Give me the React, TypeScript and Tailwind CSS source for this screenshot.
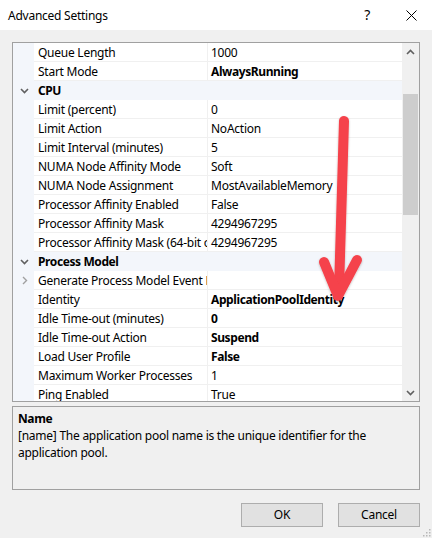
import React from "react";

type Row =
  | { kind: "cat"; name: string }
  | { kind: "prop"; name: string; value: string; bold?: boolean; expand?: boolean };

const rows: Row[] = [
  { kind: "prop", name: "Queue Length", value: "1000" },
  { kind: "prop", name: "Start Mode", value: "AlwaysRunning", bold: true },
  { kind: "cat", name: "CPU" },
  { kind: "prop", name: "Limit (percent)", value: "0" },
  { kind: "prop", name: "Limit Action", value: "NoAction" },
  { kind: "prop", name: "Limit Interval (minutes)", value: "5" },
  { kind: "prop", name: "NUMA Node Affinity Mode", value: "Soft" },
  { kind: "prop", name: "NUMA Node Assignment", value: "MostAvailableMemory" },
  { kind: "prop", name: "Processor Affinity Enabled", value: "False" },
  { kind: "prop", name: "Processor Affinity Mask", value: "4294967295" },
  { kind: "prop", name: "Processor Affinity Mask (64-bit option)", value: "4294967295" },
  { kind: "cat", name: "Process Model" },
  { kind: "prop", name: "Generate Process Model Event Log Entry", value: "", expand: true },
  { kind: "prop", name: "Identity", value: "ApplicationPoolIdentity", bold: true },
  { kind: "prop", name: "Idle Time-out (minutes)", value: "0", bold: true },
  { kind: "prop", name: "Idle Time-out Action", value: "Suspend", bold: true },
  { kind: "prop", name: "Load User Profile", value: "False", bold: true },
  { kind: "prop", name: "Maximum Worker Processes", value: "1" },
  { kind: "prop", name: "Ping Enabled", value: "True" },
];

function ChevronDown({ color = "#606060" }: { color?: string }) {
  return (
    <svg width="9" height="6" viewBox="0 0 9 6">
      <path d="M1 1 L4.5 4.5 L8 1" fill="none" stroke={color} strokeWidth="1.6" />
    </svg>
  );
}

function ChevronRight() {
  return (
    <svg width="6" height="9" viewBox="0 0 6 9">
      <path d="M1 1 L4.5 4.5 L1 8" fill="none" stroke="#a0a0a0" strokeWidth="1.4" />
    </svg>
  );
}

export default function App() {
  return (
    <div
      className="relative w-[432px] h-[538px] bg-[#f0f0f0] text-[12px] text-black overflow-hidden tracking-[-0.25px]"
      style={{ fontFamily: '"Noto Sans", "Open Sans", sans-serif' }}
    >
      {/* Title bar */}
      <div className="h-[30px] bg-white flex items-center justify-between pl-2 pr-[15px]">
        <span className="text-[12px] leading-none pt-[1px]">Advanced Settings</span>
        <div className="flex items-center gap-[36px]">
          <span className="text-[14px] leading-none">?</span>
          <svg width="11" height="11" viewBox="0 0 11 11">
            <path d="M0.5 0.5 L10.5 10.5 M10.5 0.5 L0.5 10.5" stroke="#000" strokeWidth="1" />
          </svg>
        </div>
      </div>

      <div className="px-3 pt-3">
        {/* Property grid */}
        <div className="h-[360px] border border-[#a0a0a0] bg-white flex">
          <div className="flex-1 overflow-hidden">
            {rows.map((r, i) =>
              r.kind === "cat" ? (
                <div key={i} className="h-[19px] flex bg-[#f3f6fb]">
                  <div className="w-[21px] flex items-center justify-center pl-[2px]">
                    <ChevronDown />
                  </div>
                  <div className="pl-[4px] font-bold leading-[20px] tracking-[-0.4px]">{r.name}</div>
                </div>
              ) : (
                <div key={i} className="h-[19px] flex">
                  <div className="w-[21px] bg-[#f3f6fb] flex items-center justify-center pl-[2px]">
                    {r.expand ? <ChevronRight /> : null}
                  </div>
                  <div className="w-[174px] shrink-0 border-b border-r border-[#f0f0f0] pl-[4px] overflow-hidden whitespace-nowrap leading-[19px]">
                    {r.name}
                  </div>
                  <div
                    className={
                      "flex-1 border-b border-[#f0f0f0] pl-[3px] whitespace-nowrap leading-[19px] overflow-hidden " +
                      (r.bold ? "font-bold tracking-[-0.4px]" : "")
                    }
                  >
                    {r.value}
                  </div>
                </div>
              )
            )}
          </div>
          {/* Scrollbar */}
          <div className="w-[17px] bg-[#f0f0f0] flex flex-col">
            <div className="h-[17px] flex items-center justify-center">
              <svg width="9" height="6" viewBox="0 0 9 6">
                <path d="M1 5 L4.5 1.5 L8 5" fill="none" stroke="#606060" strokeWidth="1.6" />
              </svg>
            </div>
            <div className="mt-[34px] h-[121px] mx-[1px] bg-[#cdcdcd]" />
            <div className="flex-1" />
            <div className="h-[17px] flex items-center justify-center">
              <ChevronDown />
            </div>
          </div>
        </div>

        {/* Description */}
        <div className="mt-1 h-[84px] border border-[#a0a0a0] px-[5px] pt-[3px]">
          <div className="font-bold leading-[17px] tracking-[-0.4px]">Name</div>
          <div className="leading-[17px] pr-6">
            [name] The application pool name is the unique identifier for the application pool.
          </div>
        </div>

        {/* Buttons */}
        <div className="flex justify-end gap-[15px] mt-[13px]">
          <button className="w-[82px] h-[24px] bg-[#e1e1e1] border border-[#adadad] text-[12px] leading-none">
            OK
          </button>
          <button className="w-[82px] h-[24px] bg-[#e1e1e1] border border-[#adadad] text-[12px] leading-none">
            Cancel
          </button>
        </div>
      </div>

      {/* Resize grip */}
      <svg className="absolute right-[1px] bottom-[1px]" width="10" height="10" viewBox="0 0 10 10">
        {[
          [8, 2],
          [8, 5],
          [5, 5],
          [8, 8],
          [5, 8],
          [2, 8],
        ].map(([x, y], i) => (
          <rect key={i} x={x} y={y} width="1.5" height="1.5" fill="#b8b8b8" />
        ))}
      </svg>

      {/* Red annotation arrow */}
      <svg className="absolute left-0 top-0 pointer-events-none" width="432" height="538" viewBox="0 0 432 538">
        <defs>
          <filter id="sh" x="-20%" y="-20%" width="140%" height="140%">
            <feDropShadow dx="0" dy="1" stdDeviation="1.2" floodColor="#000" floodOpacity="0.25" />
          </filter>
        </defs>
        <g filter="url(#sh)" stroke="#f5424b" strokeWidth="10" strokeLinecap="round" strokeLinejoin="round" fill="none">
          <path d="M344 121 L339 290" />
          <path d="M324 262 L338 296 L357 260" />
        </g>
      </svg>
    </div>
  );
}
